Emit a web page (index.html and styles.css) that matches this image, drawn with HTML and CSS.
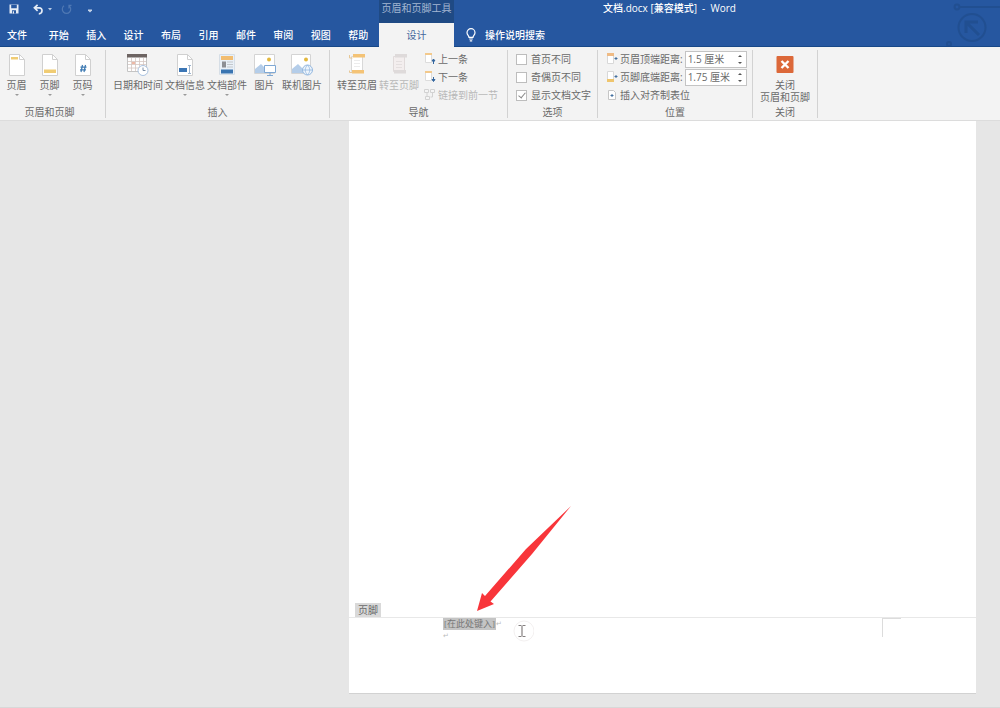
FILE: index.html
```html
<!DOCTYPE html>
<html lang="zh-CN">
<head>
<meta charset="utf-8">
<meta name="viewport" content="width=device-width, initial-scale=1">
<title>文档.docx - Word</title>
<link rel="stylesheet" href="styles.css">
</head>
<body>
<header class="titlebar">
  <div class="quick">
    <button class="quick-btn" aria-label="保存"><svg width="10" height="10" viewBox="0 0 10 10"><path d="M0.5 0.5h9v9h-9z" fill="#e6edf6"/><path d="M2.2 0.8h5.6v3.4H2.2zM3 6.2h4v3.3H3z" fill="#2657a0"/><path d="M3.8 7.2h1.1v2.3H3.8z" fill="#fff"/></svg></button>
    <button class="quick-btn undo" aria-label="撤消"><svg width="11" height="11" viewBox="0 0 11 11"><path d="M4.6 0.8L1.4 3.8l3.2 3M1.6 3.8h4.6c4 0 3.6 6-.4 6" fill="none" stroke="#e6edf6" stroke-width="1.7"/></svg></button>
    <button class="quick-btn" aria-label="撤消选项"><svg width="4" height="3" viewBox="0 0 4 3"><path d="M0 0h4L2 2.5z" fill="#b9cbe4"/></svg></button>
    <button class="quick-btn redo" aria-label="重复"><svg width="11" height="11" viewBox="0 0 11 11"><path d="M3 1.8a4.2 4.2 0 1 0 5 0M8 4.6V1.4h2.5" fill="none" stroke="#4f78b3" stroke-width="1.2"/></svg></button>
    <button class="quick-btn more" aria-label="自定义"><svg width="4" height="5" viewBox="0 0 4 5"><path d="M0 1.500h4v1L2 4.600 0 2.500z" fill="#c4d3e8"/></svg></button>
  </div>
  <div class="context-title">页眉和页脚工具</div>
  <h1 class="doc-title">文档.docx [兼容模式]&nbsp; -&nbsp; Word</h1>
  <nav class="tabs">
    <button class="tab tab-file">文件</button>
    <button class="tab">开始</button>
    <button class="tab">插入</button>
    <button class="tab">设计</button>
    <button class="tab">布局</button>
    <button class="tab">引用</button>
    <button class="tab">邮件</button>
    <button class="tab">审阅</button>
    <button class="tab">视图</button>
    <button class="tab">帮助</button>
  </nav>
  <button class="tab tab-active">设计</button>
  <button class="tell-me"><svg width="10" height="14" viewBox="0 0 10 14"><path d="M3 9.3C3 7.6 1 7 1 4.7a4 4 0 0 1 8 0C9 7 7 7.6 7 9.3zM3.2 11h3.6M3.8 12.8h2.4" fill="none" stroke="#fff" stroke-width="1.2"/></svg>操作说明搜索</button>
  <svg class="ornament" width="56" height="47" viewBox="0 0 56 47"><g fill="none" stroke="#1f4a88" stroke-width="2" opacity=".6"><circle cx="13" cy="7" r="2.4"/><path d="M16 7h40"/><circle cx="28" cy="27.500" r="13.500"/><path d="M35 35L23 23M22 33V22h12" stroke-width="3"/><circle cx="5" cy="44" r="2"/></g></svg>
</header>

<section class="ribbon" aria-label="设计">
  <div class="group group-hf">
    <div class="group-body">
      <button class="big"><svg width="16" height="22" viewBox="0 0 16 22"><path d="M.5.5h10l5 5v16H.5z" fill="#fff" stroke="#d0d0d0"/><path d="M10.500.5v5h5" fill="none" stroke="#d0d0d0"/><path d="M2 3h7v2.500H2z" fill="#f0cc73"/></svg><span>页眉</span><i class="caret"></i></button>
      <button class="big"><svg width="16" height="22" viewBox="0 0 16 22"><path d="M.5.5h10l5 5v16H.5z" fill="#fff" stroke="#d0d0d0"/><path d="M10.500.5v5h5" fill="none" stroke="#d0d0d0"/><path d="M2 15.500h12v3.500H2z" fill="#f0cc73"/></svg><span>页脚</span><i class="caret"></i></button>
      <button class="big"><svg width="16" height="22" viewBox="0 0 16 22"><path d="M.5.5h10l5 5v16H.5z" fill="#fff" stroke="#d0d0d0"/><path d="M10.500.5v5h5" fill="none" stroke="#d0d0d0"/><path d="M7.500 11L6 18M10.500 11L9 18M5.500 13.200h6M5 15.800h6" stroke="#3f7bb3" stroke-width="1.200"/></svg><span>页码</span><i class="caret"></i></button>
    </div>
    <h2 class="group-name">页眉和页脚</h2>
  </div>

  <div class="group group-insert">
    <div class="group-body">
      <button class="big"><svg width="22" height="22" viewBox="0 0 22 22"><path d="M.5.5h19v17H.5z" fill="#fff" stroke="#c4c4c4"/><path d="M0 0h20v3.500H0z" fill="#6d6462"/><path d="M4.500 4v13M8.500 4v13M12.500 4v13M16.500 4v13M1 7.500h18M1 10.500h18M1 14h18" stroke="#d5c6c2" stroke-width=".8"/><path d="M5 8h3v2H5z" fill="#eeb9a6"/><circle cx="16" cy="16.500" r="5" fill="#fff" stroke="#a9c2e0"/><path d="M16 13.500v3h2.500" fill="none" stroke="#7c8ea5"/></svg><span>日期和时间</span></button>
      <button class="big"><svg width="16" height="22" viewBox="0 0 16 22"><path d="M.5.5h10l5 5v16H.5z" fill="#fff" stroke="#d0d0d0"/><path d="M10.500.5v5h5" fill="none" stroke="#d0d0d0"/><path d="M2 14h8v4H2z" fill="#3c76b5"/><path d="M11 11.500h3M12.500 11.500v8M11 19.500h3" fill="none" stroke="#9bb3cd"/></svg><span>文档信息</span><i class="caret"></i></button>
      <button class="big"><svg width="16" height="22" viewBox="0 0 16 22"><path d="M.5.5h15v20H.5z" fill="#e9f0f7" stroke="#d6dee6"/><path d="M2 2h12v4H2z" fill="#f2bd70"/><path d="M3 7.500h4v6H3z" fill="#8d8f94"/><path d="M8 8h6M8 10.500h6M8 13h6" stroke="#c3c7cc"/><path d="M2 15.500h12v4H2z" fill="#3974b1"/></svg><span>文档部件</span><i class="caret"></i></button>
      <button class="big"><svg width="22" height="22" viewBox="0 0 22 22"><path d="M.5.5h20v19H.5z" fill="#fff" stroke="#d4d4d4"/><circle cx="15" cy="5.500" r="2" fill="#e3b83e"/><path d="M1 19v-4l6-5 7 7v2z" fill="#b4cde9"/><path d="M10.500 11.500h11v7h-11z" fill="#fff" stroke="#7fa8d4"/><path d="M16 19v2M13 21.500h6" stroke="#7fa8d4"/></svg><span>图片</span></button>
      <button class="big"><svg width="22" height="22" viewBox="0 0 22 22"><path d="M.5.5h19v19H.5z" fill="#fff" stroke="#d4d4d4"/><circle cx="15" cy="5.500" r="2" fill="#e3b83e"/><path d="M1 19v-4l6-5 7 7v2z" fill="#b4cde9"/><circle cx="16.500" cy="16" r="5" fill="#eef5fc" stroke="#94b8df"/><path d="M11.500 16h10M16.500 11c-3 3-3 7 0 10M16.500 11c3 3 3 7 0 10" fill="none" stroke="#94b8df" stroke-width=".8"/></svg><span>联机图片</span></button>
    </div>
    <h2 class="group-name">插入</h2>
  </div>

  <div class="group group-nav">
    <div class="group-body">
      <button class="big"><svg width="18" height="22" viewBox="0 0 18 22"><path d="M3.500 2.500h11v15h-11z" fill="#fff" stroke="#d8d8d8"/><path d="M6 6.500h6M6 9.500h6M6 12.500h6" stroke="#ececec"/><path d="M5 0h12v3.500H5zM4 16h12v3.500H4z" fill="#f4c376"/><path d="M1.500 1v3h3M1.500 16.500v2h3" fill="none" stroke="#e6c796"/></svg><span>转至页眉</span></button>
      <button class="big" disabled><svg width="18" height="22" viewBox="0 0 18 22"><path d="M3.500 2.500h11v15h-11z" fill="#f3eeee" stroke="#e0dada"/><path d="M5 0h12v3.500H5zM4 16h12v3.500H4z" fill="#dedada"/><path d="M6 7.500h6M6 10.500h6M6 13.500h6" stroke="#e4dfdf"/></svg><span>转至页脚</span></button>
      <div class="rows">
        <button class="row"><svg width="13" height="12" viewBox="0 0 13 12"><path d="M2.500 1.500h6v8h-6z" fill="#fff" stroke="#dcdcdc"/><path d="M2 0h7v2H2z" fill="#f3c98b"/><path d="M10.500 6v5M9 8l1.500-2L12 8z" fill="#35679f" stroke="#35679f"/></svg>上一条</button>
        <button class="row"><svg width="13" height="12" viewBox="0 0 13 12"><path d="M2.500 1.500h6v8h-6z" fill="#fff" stroke="#dcdcdc"/><path d="M2 0h7v2H2z" fill="#f3c98b"/><path d="M10.500 6v3M9 8.500l1.500 2 1.500-2z" fill="#35679f" stroke="#35679f"/></svg>下一条</button>
        <button class="row" disabled><svg width="13" height="12" viewBox="0 0 13 12"><path d="M1.500.5h4v3h-4zM7.500.5h4v3h-4zM2.500 7.500h4v3h-4z" fill="#f5f5f5" stroke="#d2d2d2"/><path d="M4 4v3M9.500 4v4h-2" fill="none" stroke="#d2d2d2"/></svg>链接到前一节</button>
      </div>
    </div>
    <h2 class="group-name">导航</h2>
  </div>

  <div class="group group-options">
    <div class="group-body">
      <div class="rows">
        <label class="row option"><input class="check" type="checkbox">首页不同</label>
        <label class="row option"><input class="check" type="checkbox">奇偶页不同</label>
        <label class="row option"><input class="check" type="checkbox" checked>显示文档文字</label>
      </div>
    </div>
    <h2 class="group-name">选项</h2>
  </div>

  <div class="group group-position">
    <div class="group-body">
      <div class="rows">
        <div class="row"><svg width="12" height="12" viewBox="0 0 12 12"><path d="M1.500 1.500h6v9h-6z" fill="#fff" stroke="#d8d8d8"/><path d="M1 0h7v3H1z" fill="#efbb85"/><path d="M10 4v3M8.500 5.500h3" stroke="#45719f"/></svg><label for="top">页眉顶端距离:</label>
          <span class="spin"><input id="top" class="spin-input" type="text" value="1.5 厘米"><span class="arrows"><button class="arrow up" aria-label="增加"></button><button class="arrow down" aria-label="减少"></button></span></span></div>
        <div class="row"><svg width="12" height="12" viewBox="0 0 12 12"><path d="M1.500.5h6v9h-6z" fill="#fff" stroke="#d8d8d8"/><path d="M1 8h7v3H1z" fill="#efc56d"/><path d="M10 4v3M8.500 5.500h3" stroke="#45719f"/></svg><label for="bottom">页脚底端距离:</label>
          <span class="spin"><input id="bottom" class="spin-input" type="text" value="1.75 厘米"><span class="arrows"><button class="arrow up" aria-label="增加"></button><button class="arrow down" aria-label="减少"></button></span></span></div>
        <button class="row"><svg width="12" height="12" viewBox="0 0 12 12"><path d="M2.500 1.500h5l2 2v7h-7z" fill="#fff" stroke="#c6c6c6"/><path d="M4.500 6.500h3M6 5v3" stroke="#45719f"/></svg>插入对齐制表位</button>
      </div>
    </div>
    <h2 class="group-name">位置</h2>
  </div>

  <div class="group group-close">
    <div class="group-body">
      <button class="big"><svg width="18" height="22" viewBox="0 0 18 22"><rect x=".5" y="2" width="17" height="17" rx="1" fill="#dc6839"/><path d="M5.500 7l7 7M12.500 7l-7 7" stroke="#fff" stroke-width="2.400"/></svg><span>关闭<br>页眉和页脚</span></button>
    </div>
    <h2 class="group-name">关闭</h2>
  </div>
</section>

<main class="workspace">
  <article class="page">
    <svg class="pointer-arrow" width="96" height="106" viewBox="0 0 96 106"><path d="M95 0L50 43 9 90 6 87 1 105 18 98 14.500 95.500 56 48z" fill="#f8353a"/></svg>
    <div class="footer-label">页脚</div>
    <footer class="page-footer">
      <p class="line"><mark class="placeholder">[在此处键入]</mark><span class="mark">↵</span></p>
      <p class="line"><span class="mark">↵</span></p>
      <span class="margin-corner"></span>
      <svg class="cursor" width="24" height="24" viewBox="0 0 24 24"><circle cx="14" cy="12" r="10" fill="none" stroke="#f3f0f0"/><path d="M8.500 6.500h3M12.500 6.500h3M8.500 17.500h3M12.500 17.500h3M12 7v10" stroke="#858080" stroke-width="1.200"/></svg>
    </footer>
  </article>
</main>
</body>
</html>
```
FILE: styles.css
```css
* { box-sizing: border-box; }

body {
  margin: 0;
  min-height: 100vh;
  display: flex;
  flex-direction: column;
  font-family: "Open Sans", "Noto Sans CJK SC", sans-serif;
  font-size: 10px;
  line-height: 12px;
  color: #6a6a6a;
  background: #e6e6e6;
}

button {
  margin: 0;
  padding: 0;
  border: 0;
  background: none;
  color: inherit;
  font: inherit;
  white-space: nowrap;
}

svg { flex: none; display: block; }

/* Title bar and tabs */
.titlebar {
  position: relative;
  display: grid;
  grid-template-columns: 379px 75px 1fr;
  grid-template-rows: 23px 24px;
  background: #2657a0;
  color: #fff;
}

.quick {
  display: flex;
  align-items: center;
  gap: 4px;
  padding: 0 0 5px 9px;
}
.quick-btn.undo { margin-left: 10px; }
.quick-btn.redo { margin-left: 5px; }
.quick-btn.more { margin-left: 12px; padding-top: 2px; }

.context-title {
  padding-top: 2px;
  text-align: center;
  background: #1f4a84;
  color: #a3b6d2;
}

.doc-title {
  margin: 0;
  padding: 2px 0 0 149px;
  font-size: 10px;
  font-weight: 500;
}

.tabs {
  display: flex;
  padding-right: 2px;
  border-bottom: 1px solid #174888;
}
.tab { flex: 1; font-weight: 500; }
.tab-file {
  flex: none;
  width: 40px;
  padding-left: 7px;
  text-align: left;
}
.tab-active {
  background: #f3f3f3;
  color: #44679c;
  font-weight: 400;
}
.tell-me {
  display: flex;
  align-items: center;
  gap: 9px;
  padding-left: 12px;
  border-bottom: 1px solid #174888;
  font-weight: 500;
}
.ornament {
  position: absolute;
  top: 0;
  right: 0;
}

/* Ribbon */
.ribbon {
  display: flex;
  padding: 3px 0 2px;
  background: #f3f3f3;
  border-bottom: 1px solid #dcdcdc;
}
.group {
  flex: none;
  display: flex;
  flex-direction: column;
  min-height: 68px;
  border-right: 1px solid #d2d2d2;
}
.group-body {
  flex: 1;
  display: flex;
  gap: 2px;
}
.group-name {
  margin: 0;
  font-size: 10px;
  font-weight: 400;
  text-align: center;
}
.group-hf { width: 106px; padding-right: 6px; }
.group-hf .group-body { gap: 0; }
.group-hf .big { width: 33px; }
.group-insert { width: 224px; }
.group-insert .group-body { padding-left: 7px; }
.group-insert .big { min-width: 31px; }
.group-nav { width: 178px; }
.group-nav .group-body { padding-left: 7px; }
.group-options { width: 90px; }
.group-options .group-body { padding-left: 8px; }
.group-position { width: 155px; }
.group-position .group-body { padding-left: 8px; }
.group-close { width: 65px; }
.group-close .group-body { justify-content: center; }

.big {
  display: flex;
  flex-direction: column;
  align-items: center;
  gap: 3px;
  padding-top: 4px;
}
.caret {
  border: 2px solid transparent;
  border-top-color: #999;
  border-bottom: 0;
}
button:disabled { color: #b8b8b8; }

.rows { display: flex; flex-direction: column; }
.row {
  display: flex;
  align-items: center;
  gap: 2px;
  height: 18px;
  white-space: nowrap;
}
.group-nav .rows { margin-left: 2px; }
.option { gap: 4px; }

.check {
  appearance: none;
  width: 11px;
  height: 11px;
  margin: 0;
  background: #fff;
  border: 1px solid #bdbdbd;
}
.check:checked::after {
  content: "";
  display: block;
  width: 3px;
  height: 6px;
  margin: 0 auto;
  border: solid #888;
  border-width: 0 1px 1px 0;
  transform: rotate(40deg);
}

.spin {
  display: flex;
  width: 62px;
  height: 17px;
  background: #fff;
  border: 1px solid #c4c4c4;
}
.spin-input {
  flex: 1;
  min-width: 0;
  padding: 0 2px;
  border: 0;
  background: none;
  color: #6a6a6a;
  font: inherit;
}
.arrows {
  display: flex;
  flex-direction: column;
  justify-content: space-between;
  padding: 3px 4px;
}
.arrow { border: 2px solid transparent; }
.up { border-top: 0; border-bottom-color: #555; }
.down { border-bottom: 0; border-top-color: #555; }

/* Document */
.workspace {
  flex: 1;
  display: flex;
  padding: 0 24px 13px 349px;
  border-bottom: 1px solid #d8d8d8;
}
.page {
  position: relative;
  flex: 1;
  display: flex;
  flex-direction: column;
  justify-content: flex-end;
  background: #fff;
  border-bottom: 1px solid #d2d2d2;
}
.footer-label {
  align-self: flex-start;
  margin-left: 6px;
  padding: 1px 3px;
  background: #d9d9d9;
}
.page-footer {
  position: relative;
  height: 76px;
  padding-left: 94px;
  border-top: 1px solid #e8e8e8;
}
.line {
  display: flex;
  align-items: center;
  margin: 0;
  font-family: "Liberation Serif", "Noto Sans CJK SC", serif;
  font-size: 9px;
}
.placeholder {
  padding: 0 1px;
  background: #c4c4c4;
  color: #777;
}
.mark { color: #bbb; font-size: 7px; }
.margin-corner {
  position: absolute;
  top: 0;
  right: 75px;
  width: 19px;
  height: 19px;
  border-left: 1px solid #dcdcdc;
  border-top: 1px solid #dcdcdc;
}
.cursor {
  position: absolute;
  top: 1px;
  left: 161px;
}
.pointer-arrow {
  position: absolute;
  left: 127px;
  bottom: 81px;
}
```
